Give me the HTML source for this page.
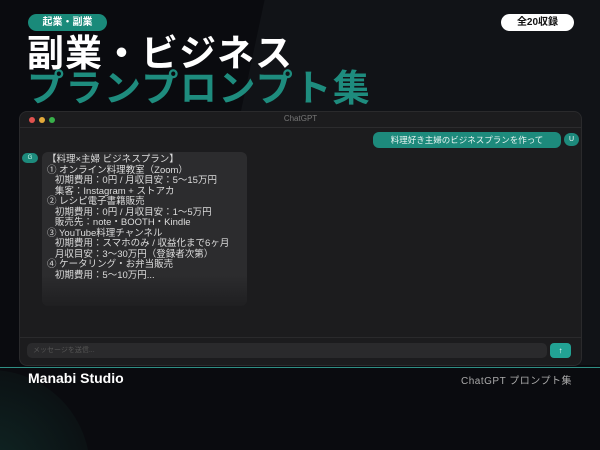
<!DOCTYPE html>
<html><head><meta charset="utf-8"><style>
*{margin:0;padding:0;box-sizing:border-box}
html,body{width:600px;height:450px;overflow:hidden}
body{background:#0a0b0f;font-family:"Liberation Sans","Noto Sans CJK JP",sans-serif}
.wrap{position:relative;width:600px;height:450px;overflow:hidden}
.bg1{position:absolute;left:230px;top:-40px;width:600px;height:405px;background:#111317;transform:skewX(-12deg);}
.glow{position:absolute;left:-110px;top:370px;width:200px;height:200px;border-radius:50%;background:radial-gradient(circle,#0f2624 0%,#0c1315 65%,#0a0b0f 100%)}
.pill{position:absolute;border-radius:9px;font-size:10px;font-weight:bold;text-align:center;line-height:17px}
.t1{position:absolute;left:27px;top:34px;font-size:37px;font-weight:bold;color:#fff;letter-spacing:1px;line-height:40px;white-space:nowrap}
.t2{position:absolute;left:27px;top:69px;font-size:37px;font-weight:bold;color:#1e8c7e;letter-spacing:1.5px;line-height:40px;white-space:nowrap}
.win{position:absolute;left:19px;top:111px;width:563px;height:255px;background:#1c1c1e;border-radius:8px;border:1px solid #2a2a2c}
.bar{height:16px;border-bottom:1px solid #2c2c2e;position:relative}
.dot{position:absolute;top:5px;width:6px;height:6px;border-radius:50%}
.msg{position:absolute;font-size:9.5px;line-height:10.5px;color:#ddd;white-space:pre}
</style></head><body><div class="wrap">
<div class="bg1"></div>
<div class="glow"></div>
<div class="pill" style="left:28px;top:14px;width:79px;background:#1a8a7a;color:#fff">起業・副業</div>
<div class="pill" style="left:501px;top:14px;width:73px;background:#fff;color:#111">全20収録</div>
<div class="t1">副業・ビジネス</div>
<div class="t2">プランプロンプト集</div>
<div class="win">
 <div class="bar">
  <div class="dot" style="left:9px;background:#e0524e"></div>
  <div class="dot" style="left:19px;background:#e3a93a"></div>
  <div class="dot" style="left:29px;background:#38b04a"></div>
  <div style="position:absolute;left:0;right:0;top:2px;text-align:center;font-size:8px;color:#777">ChatGPT</div>
 </div>
 <div style="position:absolute;left:353px;top:20px;width:188px;height:16px;border-radius:6px;background:#1d8a7c;color:#e8f5f3;font-size:8.5px;line-height:16px;text-align:center">料理好き主婦のビジネスプランを作って</div>
 <div style="position:absolute;left:544px;top:21px;width:15px;height:13px;border-radius:7px;background:#1d8a7c;color:#fff;font-size:7px;line-height:13px;text-align:center">U</div>
 <div style="position:absolute;left:2px;top:41px;width:16px;height:10px;border-radius:5px;background:#1d8a7c;color:#cfe;font-size:6px;line-height:10px;text-align:center">G</div>
 <div style="position:absolute;left:22px;top:40px;width:205px;height:154px;border-radius:6px;background:linear-gradient(#2c2c2e 80%,#1f1f21)"></div>
 <div class="msg" style="left:27px;top:43px">【料理×主婦 ビジネスプラン】
① オンライン料理教室（Zoom）
   初期費用：0円 / 月収目安：5〜15万円
   集客：Instagram + ストアカ
② レシピ電子書籍販売
   初期費用：0円 / 月収目安：1〜5万円
   販売先：note・BOOTH・Kindle
③ YouTube料理チャンネル
   初期費用：スマホのみ / 収益化まで6ヶ月
   月収目安：3〜30万円（登録者次第）
④ ケータリング・お弁当販売
   初期費用：5〜10万円...</div>
 <div style="position:absolute;left:0;right:0;top:225px;border-top:1px solid #2a2a2c"></div>
 <div style="position:absolute;left:7px;top:231px;width:520px;height:15px;border-radius:5px;background:#2a2a2c;color:#555;font-size:7px;line-height:15px;padding-left:6px">メッセージを送信...</div>
 <div style="position:absolute;left:530px;top:231px;width:21px;height:15px;border-radius:4px;background:#22a294;color:#fff;font-size:8px;line-height:15px;text-align:center">↑</div>
</div>
<div style="position:absolute;left:0;top:367px;width:600px;height:1px;background:#2f8f84"></div>
<div style="position:absolute;left:28px;top:370px;font-size:14px;font-weight:bold;color:#fff">Manabi Studio</div>
<div style="position:absolute;right:28px;top:372px;font-size:10px;letter-spacing:0.5px;color:#aaa">ChatGPT プロンプト集</div>
</div></body></html>
